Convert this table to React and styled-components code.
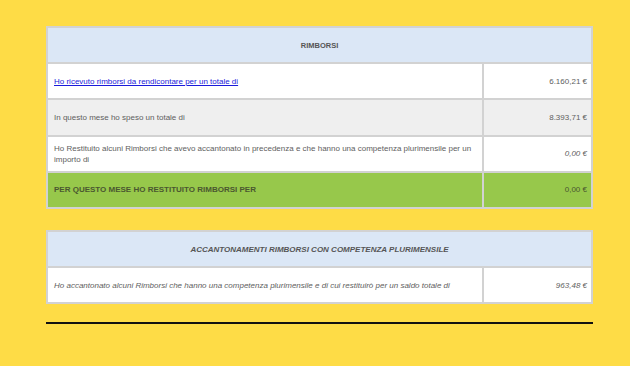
import React from "react";
import styled, { createGlobalStyle } from "styled-components";

const GlobalStyle = createGlobalStyle`
	html, body {
		margin: 0;
		padding: 0;
		background: #fedc46;
	}
	body {
		font-family: "Liberation Sans", Arial, sans-serif;
	}
`;

const rimborsi = [
	{ label: "Ho ricevuto rimborsi da rendicontare per un totale di", value: "6.160,21 €", link: true },
	{ label: "In questo mese ho speso un totale di", value: "8.393,71 €", shade: true },
	{
		label:
			"Ho Restituito alcuni Rimborsi che avevo accantonato in precedenza e che hanno una competenza plurimensile per un importo di",
		value: "0,00 €",
		italicValue: true,
	},
];

function App() {
	return (
		<>
			<GlobalStyle />
			<Page>
				<Table>
					<colgroup>
						<col style={{ width: "436px" }} />
						<col />
					</colgroup>
					<tbody>
						<tr>
							<HeadCell colSpan={2}>RIMBORSI</HeadCell>
						</tr>
						{rimborsi.map((r) => (
							<tr key={r.label}>
								<LabelCell $shade={r.shade}>
									{r.link ? <Link href="#">{r.label}</Link> : r.label}
								</LabelCell>
								<ValueCell $shade={r.shade} $italic={r.italicValue}>
									{r.value}
								</ValueCell>
							</tr>
						))}
						<tr>
							<TotalCell>PER QUESTO MESE HO RESTITUITO RIMBORSI PER</TotalCell>
							<TotalValue>0,00 €</TotalValue>
						</tr>
					</tbody>
				</Table>

				<Table>
					<colgroup>
						<col style={{ width: "436px" }} />
						<col />
					</colgroup>
					<tbody>
						<tr>
							<HeadCell colSpan={2} $italic>
								ACCANTONAMENTI RIMBORSI CON COMPETENZA PLURIMENSILE
							</HeadCell>
						</tr>
						<tr>
							<LabelCell $italic>
								Ho accantonato alcuni Rimborsi che hanno una competenza plurimensile e di cui restituirò per un saldo
								totale di
							</LabelCell>
							<ValueCell $italic>963,48 €</ValueCell>
						</tr>
					</tbody>
				</Table>

				<Rule />
			</Page>
		</>
	);
}

export default App;

const Page = styled.div`
	width: 547px;
	padding: 26px 0 0 46px;
	display: flex;
	flex-direction: column;
	gap: 21px;
	height: 366px;
	box-sizing: border-box;
`;

const Table = styled.table`
	width: 547px;
	table-layout: fixed;
	border-collapse: separate;
	border-spacing: 0;
	border: 1px solid #d2d2d2;
	font-size: 8px;
	color: #5e5e5e;

	td {
		border: 1px solid #d2d2d2;
		height: 36.2px;
		box-sizing: border-box;
		vertical-align: middle;
		line-height: 11px;
	}
`;

const HeadCell = styled.td`
	background: #dbe7f6;
	text-align: center;
	font-weight: bold;
	font-size: ${(p) => (p.$italic ? "8px" : "7.5px")};
	font-style: ${(p) => (p.$italic ? "italic" : "normal")};
	color: #555;
`;

const LabelCell = styled.td`
	background: ${(p) => (p.$shade ? "#efefef" : "#fff")};
	padding: 0 6px;
	font-style: ${(p) => (p.$italic ? "italic" : "normal")};
`;

const ValueCell = styled.td`
	background: ${(p) => (p.$shade ? "#efefef" : "#fff")};
	padding: 0 4px;
	text-align: right;
	font-style: ${(p) => (p.$italic ? "italic" : "normal")};
`;

const Link = styled.a`
	color: #1a1adb;
	text-decoration: underline;
`;

const TotalCell = styled.td`
	background: #97c84b;
	padding: 0 6px;
	font-weight: bold;
	font-size: 8px;
	color: #4a5730;
`;

const TotalValue = styled.td`
	background: #97c84b;
	padding: 0 4px;
	text-align: right;
	color: #4a5730;
`;

const Rule = styled.div`
	width: 547px;
	height: 2px;
	background: #111;
	margin-top: -3px;
`;
